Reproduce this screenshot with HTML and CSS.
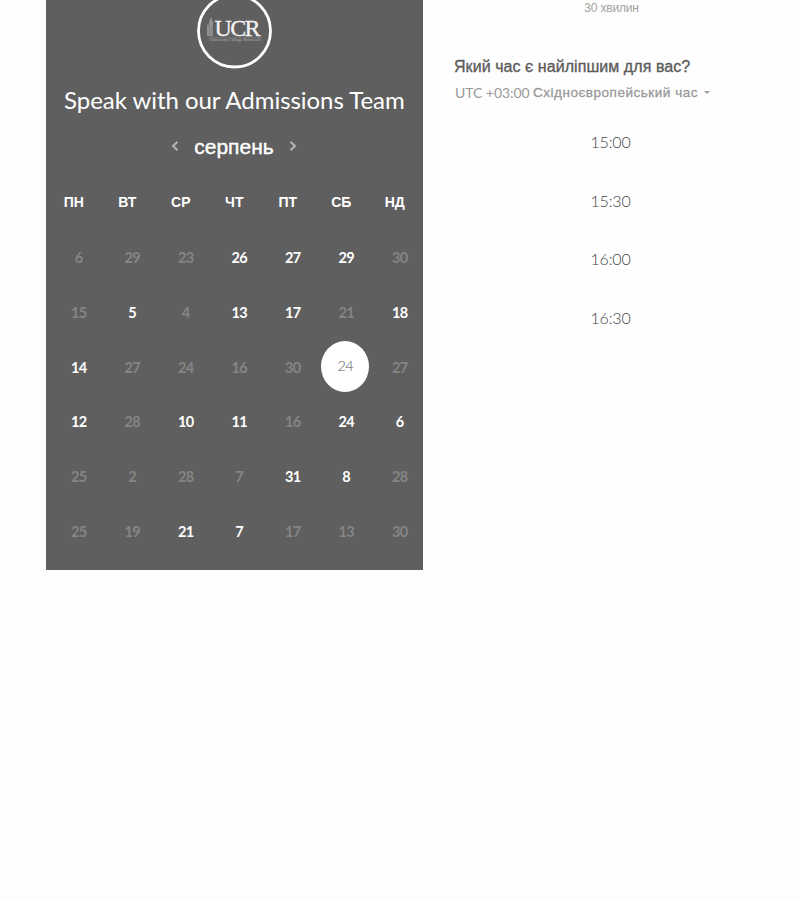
FILE: index.html
```
<!DOCTYPE html>
<html lang="uk">
<head>
<meta charset="utf-8">
<title>Speak with our Admissions Team</title>
<link rel="stylesheet" href="styles.css">
</head>
<body>
<main class="scheduler">
  <section class="calendar">
    <svg class="logo" width="76" height="70" viewBox="0 0 76 70">
      <circle cx="37.500" cy="31" r="36" fill="none" stroke="#fff" stroke-width="2.8"/>
      <path d="M10 36V26l1-2 1 2v-4l2-5 2 5v14z" fill="#929292"/>
      <path d="M12.500 25v10M15 25v10" stroke="#747474" stroke-width=".7"/>
      <text class="logo-name" x="17.500" y="36" textLength="46">UCR</text>
      <path d="M12 37.300h52" stroke="#858585" stroke-width=".6"/>
      <text class="logo-sub" x="12.500" y="41.300" textLength="51">University College Roosevelt</text>
    </svg>
    <h1 class="title"><span>Speak with our Admissions Team</span></h1>
    <div class="month">
      <svg width="8" height="12" viewBox="0 0 8 12"><path d="M6.500 1.700 2 6l4.500 4.300"/></svg>
      <span class="month-name">серпень</span>
      <svg width="8" height="12" viewBox="0 0 8 12"><path d="M1.500 1.700 6 6l-4.500 4.300"/></svg>
    </div>
    <div class="weekdays"><span>ПН</span><span>ВТ</span><span>СР</span><span>ЧТ</span><span>ПТ</span><span>СБ</span><span>НД</span></div>
    <div class="days">
      <span>6</span><span>29</span><span>23</span><b>26</b><b>27</b><b>29</b><span>30</span>
      <span>15</span><b>5</b><span>4</span><b>13</b><b>17</b><span>21</span><b>18</b>
      <b>14</b><span>27</span><span>24</span><span>16</span><span>30</span><span class="selected"><i>24</i></span><span>27</span>
      <b>12</b><span>28</span><b>10</b><b>11</b><span>16</span><b>24</b><b>6</b>
      <span>25</span><span>2</span><span>28</span><span>7</span><b>31</b><b>8</b><span>28</span>
      <span>25</span><span>19</span><b>21</b><b>7</b><span>17</span><span>13</span><span>30</span>
    </div>
  </section>
  <section class="times">
    <div class="duration">30 хвилин</div>
    <h2 class="question"><span>Який час є найліпшим для вас?</span></h2>
    <div class="zone"><span class="utc">UTC +03:00</span><span class="zone-name">Східноєвропейський час</span><span class="caret"></span></div>
    <div class="slots"><div>15:00</div><div>15:30</div><div>16:00</div><div>16:30</div></div>
  </section>
</main>
</body>
</html>
```
FILE: styles.css
```
* { box-sizing: border-box; }
body {
  margin: 0;
  height: 900px;
  overflow: hidden;
  background: #fdfdfd;
  font-family: Lato, "Liberation Sans", sans-serif;
}
.scheduler {
  display: flex;
  height: 570px;
  padding-left: 46px;
  background: #fefefe;
}
.calendar {
  width: 377px;
  height: 570px;
  background: #5f5f5f;
  color: #fff;
}
.logo { display: block; margin: 0 auto; }
.logo-name { font: 24px "Liberation Serif", serif; fill: #f4f4f4; stroke: #f4f4f4; stroke-width: .3px; }
.logo-sub { font: 4.500px "Liberation Serif", serif; fill: #b5b5b5; }
.title {
  margin: 14px 0 0;
  height: 32px;
  line-height: 32px;
  padding-left: 18px;
  font-size: 24px;
  font-weight: 400;
  letter-spacing: -.04px;
  white-space: nowrap;
}
.month {
  display: flex;
  justify-content: center;
  align-items: center;
  gap: 15px;
  height: 30px;
  margin: 16px 1px 0 0;
}
.month svg { margin-top: -2px; }
.month path { fill: none; stroke: #b4b4b4; stroke-width: 2; }
.month-name {
  font: 21px/30px "Liberation Sans", sans-serif;
  -webkit-text-stroke: .4px #fff;
}
.weekdays, .days {
  display: grid;
  grid-template-columns: repeat(7, 53.500px);
}
.weekdays {
  margin: 30px 0 0 1px;
  height: 20px;
  font: bold 14px/20px "Liberation Sans", sans-serif;
  text-align: center;
}
.days {
  grid-auto-rows: 54.700px;
  margin: 18.500px 0 0 6px;
  font-size: 14.500px;
  letter-spacing: -.6px;
}
.days > * {
  display: flex;
  align-items: center;
  justify-content: center;
  font-weight: 700;
}
.days > span { color: #858585; }
.days > .selected { color: #555; font-weight: 300; }
.selected i {
  flex: none;
  width: 48px;
  height: 51px;
  margin: -2px 2px 0 0;
  border-radius: 50%;
  background: #fff;
  line-height: 50px;
  text-align: center;
  font-style: normal;
}
.times { width: 315px; margin-left: 31px; }
.duration {
  height: 25px;
  padding-top: 1px;
  border-bottom: 1px solid #fcfcfc;
  background: #fdfdfd;
  color: #a2a2a2;
  font: 12px/15px "Liberation Sans", sans-serif;
  letter-spacing: -.2px;
  text-align: center;
}
.question {
  margin: 31px 0 0;
  height: 22px;
  font: 16px/22px "Liberation Sans", sans-serif;
  letter-spacing: .06px;
  color: #5c5c5c;
  -webkit-text-stroke: .35px #5c5c5c;
  white-space: nowrap;
}
.zone {
  display: flex;
  align-items: center;
  height: 20px;
  margin-top: 4px;
  padding-left: 1px;
  white-space: nowrap;
  color: #999;
}
.utc { width: 78px; font-size: 14px; letter-spacing: -.05px; }
.zone-name {
  font: 13.500px "Liberation Sans", sans-serif;
  letter-spacing: .52px;
  -webkit-text-stroke: .3px #999;
}
.caret {
  margin-left: 6px;
  border: 3px solid transparent;
  border-top-color: #a0a0a0;
  border-bottom: 0;
}
.slots {
  display: grid;
  grid-auto-rows: 52px;
  gap: 6.700px;
  margin: 14px 7px 0 5px;
}
.slots div {
  border: 1px solid #fcfcfc;
  line-height: 50px;
  text-align: center;
  font-size: 16px;
  font-weight: 300;
  letter-spacing: -.2px;
  color: #444;
}
```
